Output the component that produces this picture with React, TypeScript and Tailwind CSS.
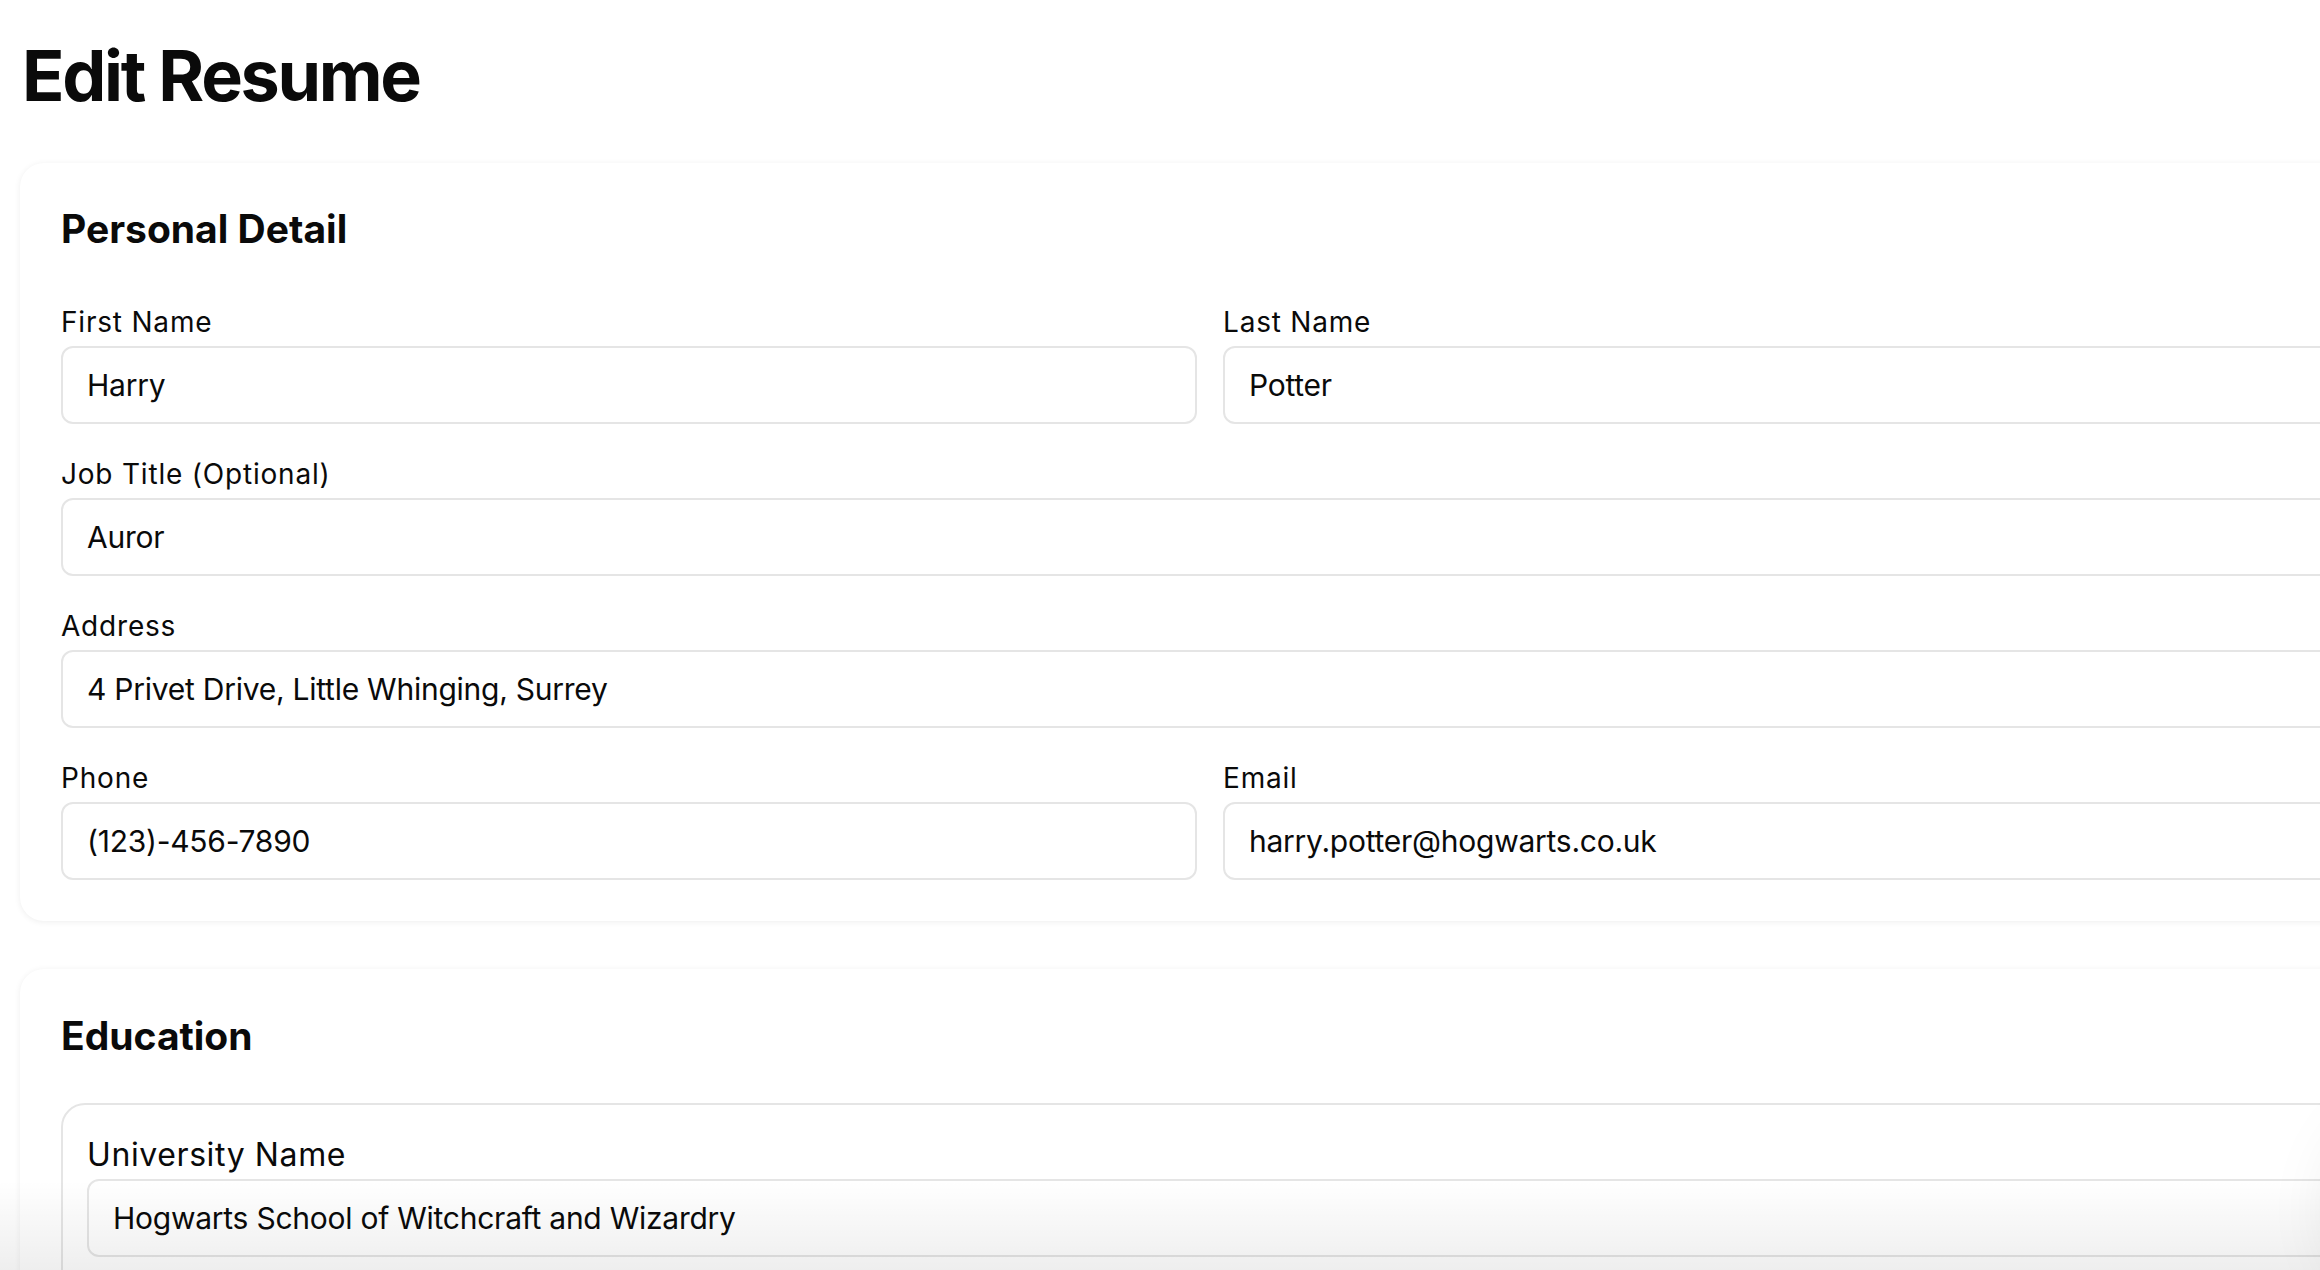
import React from "react";

const inputCls =
  "h-[78px] w-full rounded-[12px] border-2 border-[#e5e5e5] bg-white px-[24px] text-[30px] tracking-[-0.25px] text-[#0a0a0a] outline-none [font-variant-numeric:proportional-nums]";

function Field({ label, value }: { label: string; value: string }) {
  return (
    <div className="flex flex-col">
      <label className="text-[28px] leading-[40px] tracking-[0.8px] mb-[4px]">{label}</label>
      <input readOnly value={value} className={inputCls} />
    </div>
  );
}

export default function App() {
  return (
    <div className="relative w-[2320px] h-[1270px] overflow-hidden bg-white text-[#0a0a0a] [font-family:Inter,'Liberation_Sans',sans-serif]">
      <div className="w-[2420px] px-[20px] pt-[36px]">
        <h1 className="text-[70px] leading-[80px] font-bold tracking-[-2.3px] pl-[2px]">Edit Resume</h1>

        <section className="mt-[47px] rounded-[24px] bg-white shadow-[0_1px_6px_rgba(0,0,0,0.07)] px-[41px] pt-[38px] pb-[41px]">
          <h2 className="text-[39px] leading-[56px] font-bold">Personal Detail</h2>
          <div className="mt-[45px] grid grid-cols-2 gap-x-[26px] gap-y-[30px]">
            <Field label="First Name" value="Harry" />
            <Field label="Last Name" value="Potter" />
            <div className="col-span-2">
              <Field label="Job Title (Optional)" value="Auror" />
            </div>
            <div className="col-span-2">
              <Field label="Address" value="4 Privet Drive, Little Whinging, Surrey" />
            </div>
            <Field label="Phone" value="(123)-456-7890" />
            <Field label="Email" value="harry.potter@hogwarts.co.uk" />
          </div>
        </section>

        <section className="mt-[48px] rounded-[24px] bg-white shadow-[0_1px_6px_rgba(0,0,0,0.07)] px-[41px] pt-[39px] pb-[41px]">
          <h2 className="text-[39px] leading-[56px] font-bold">Education</h2>
          <div className="mt-[39px] rounded-[24px] border-2 border-[#e5e5e5] px-[24px] pt-[26px] pb-[24px]">
            <div className="flex flex-col">
              <label className="text-[32px] leading-[48px] tracking-[0.6px]">University Name</label>
              <input readOnly value="Hogwarts School of Witchcraft and Wizardry" className={inputCls} />
            </div>
            <div className="h-[300px]" />
          </div>
        </section>
      </div>

      <div className="pointer-events-none absolute left-0 right-0 bottom-0 h-[90px] bg-gradient-to-b from-[rgba(0,0,0,0)] to-[rgba(0,0,0,0.065)]" />
      <div className="pointer-events-none absolute left-[2335px] top-[1110px] h-[200px] w-[200px] rounded-full shadow-[0_0_70px_rgba(0,0,0,0.10)]" />
    </div>
  );
}
